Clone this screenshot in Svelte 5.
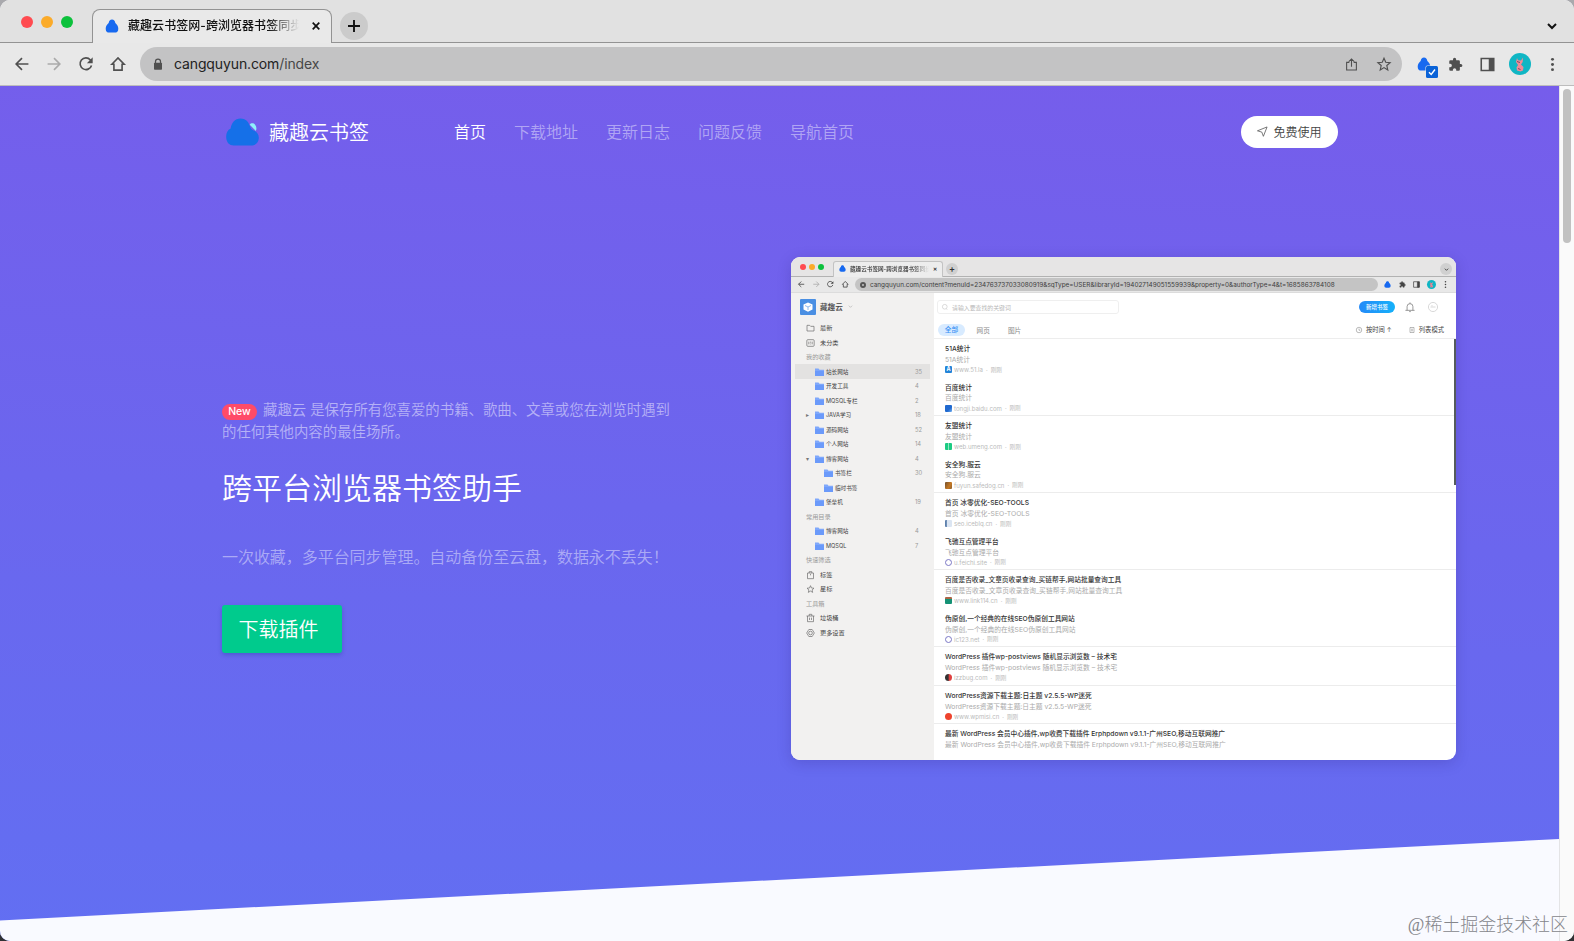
<script>
  const navItems = ['首页', '下载地址', '更新日志', '问题反馈', '导航首页'];

  const sideItems = [
    { type: 'icon', icon: 'folder', label: '最新' },
    { type: 'icon', icon: 'inbox', label: '未分类' },
    { type: 'group', label: '我的收藏' },
    { type: 'dir', label: '站长网站', count: 35, active: true },
    { type: 'dir', label: '开发工具', count: 4 },
    { type: 'dir', label: 'MQSQL专栏', count: 2 },
    { type: 'dir', label: 'JAVA学习', count: 18, arrow: 'right' },
    { type: 'dir', label: '源码网站', count: 52 },
    { type: 'dir', label: '个人网站', count: 14 },
    { type: 'dir', label: '博客网站', count: 4, arrow: 'down' },
    { type: 'dir', label: '书签栏', count: 30, child: true },
    { type: 'dir', label: '临时书签', count: '', child: true },
    { type: 'dir', label: '堡垒机', count: 19 },
    { type: 'group', label: '常用目录' },
    { type: 'dir', label: '博客网站', count: 4 },
    { type: 'dir', label: 'MQSQL', count: 7 },
    { type: 'group', label: '快速筛选' },
    { type: 'icon', icon: 'tag', label: '标签' },
    { type: 'icon', icon: 'star', label: '星标' },
    { type: 'group', label: '工具箱' },
    { type: 'icon', icon: 'trash', label: '垃圾桶' },
    { type: 'icon', icon: 'gear', label: '更多设置' }
  ];

  const bookmarks = [
    { title: '51A统计', url: 'www.51.la', icon: 'blue' },
    { title: '百度统计', url: 'tongji.baidu.com', icon: 'chart', line: true },
    { title: '友盟统计', url: 'web.umeng.com', icon: 'green' },
    { title: '安全狗.服云', url: 'fuyun.safedog.cn', icon: 'dog', line: true },
    { title: '首页 冰零优化-SEO-TOOLS', url: 'seo.iceblq.cn', icon: 'pale' },
    { title: '飞驰互点管理平台', url: 'u.feichi.site', icon: 'globe', line: true },
    { title: '百度是否收录_文章页收录查询_买链帮手,网站批量查询工具', url: 'www.link114.cn', icon: 'teal' },
    { title: '伪原创,一个经典的在线SEO伪原创工具网站', url: 'ic123.net', icon: 'globe', line: true },
    { title: 'WordPress 插件wp-postviews 随机显示浏览数 – 技术宅', url: 'izzbug.com', icon: 'bug', line: true },
    { title: 'WordPress资源下载主题:日主题 v2.5.5-WP迷死', url: 'www.wpmisi.cn', icon: 'red', line: true },
    { title: '最新 WordPress 会员中心插件,wp收费下载插件 Erphpdown v9.1.1-广州SEO,移动互联网推广', url: '', icon: '' }
  ];
</script>

{#snippet cloud(cls)}
  <svg class={cls} viewBox="0 0 16 16">
    <path fill="#1769f0" d="M8 .5C5.800.5 4.600 2 4.200 4.500 2.200 6.200.8 8.600.8 11 .8 13.800 2.300 15.500 5 15.500h6c2.700 0 4.200-1.700 4.200-4.500 0-2.400-1.400-4.800-3.400-6.500C11.400 2 10.200.5 8 .5z" />
  </svg>
{/snippet}

{#snippet glyph(name)}
  <svg class="glyph" viewBox="0 0 24 24" fill="none" stroke="currentColor" stroke-width="2">
    {#if name === 'back'}
      <path d="M23 12H2M12 2L2 12l10 10" />
    {:else if name === 'forward'}
      <path d="M1 12h21M12 2l10 10-10 10" />
    {:else if name === 'reload'}
      <path d="M21.500 14.500a10 10 0 1 1-2-9.500l2 2.200" /><path fill="currentColor" stroke="none" d="M23.500.5v10h-10z" />
    {:else if name === 'home'}
      <path d="M1.500 12.500L12 1.500l10.500 11H19V22.500H5v-10z" />
    {:else if name === 'chevron'}
      <path d="M4 8l8 8 8-8" />
    {:else if name === 'puzzle'}
      <path fill="currentColor" stroke="none" d="M20.500 11H19V7a2 2 0 0 0-2-2h-4V3.500a2.500 2.500 0 0 0-5 0V5H4a2 2 0 0 0-2 2v3.800h1.500a2.700 2.700 0 0 1 0 5.400H2V20a2 2 0 0 0 2 2h3.800v-1.500a2.700 2.700 0 0 1 5.400 0V22H17a2 2 0 0 0 2-2v-4h1.500a2.500 2.500 0 0 0 0-5z" />
    {:else if name === 'panel'}
      <path stroke-width="2.500" d="M2 2.500h20v19H2z" /><path fill="currentColor" d="M15 3h6v18h-6z" />
    {:else if name === 'more'}
      <g fill="currentColor" stroke="none"><circle cx="12" cy="2.500" r="2.700" /><circle cx="12" cy="12" r="2.700" /><circle cx="12" cy="21.500" r="2.700" /></g>
    {:else if name === 'share'}
      <path d="M8 8H3v14h18V8h-5M12 16V2M7 6.500L12 1.800l5 4.700" />
    {:else if name === 'star'}
      <path d="M12 2l3 7 7.500.700-5.700 5 1.700 7.500L12 18.200l-6.500 4 1.700-7.500-5.700-5L9 9z" />
    {:else if name === 'folder'}
      <path d="M1.500 4h8l3 3h10v14h-21z" />
    {:else if name === 'inbox'}
      <rect x="1" y="2" width="22" height="20" rx="3" /><path d="M7 8v8M12 8v3M12 14v2M17 8v8" />
    {:else if name === 'tag'}
      <path d="M3 6h18v17H3zM8 6V2h8v4" /><path d="M12 9v4" />
    {:else if name === 'trash'}
      <path d="M0 6h24M3 6v17h18V6M8 6V1h8v5M9 11v7M15 11v7" />
    {:else if name === 'gear'}
      <path d="M7 1.500h10l2.500 4L23.500 12l-4 6.500-2.500 4H7l-2.500-4L.5 12l4-6.500z" /><circle cx="12" cy="12" r="5.500" />
    {:else if name === 'bell'}
      <path d="M1 20h22M5 20v-9a7 7 0 0 1 14 0v9M12 4V1M10 23h4" />
    {:else if name === 'face'}
      <circle cx="12" cy="12" r="11" /><path d="M6 12h12M8 9h3" />
    {:else if name === 'clock'}
      <circle cx="12" cy="12" r="11" /><path d="M12 6v7h5" />
    {:else if name === 'list'}
      <path d="M4 2h16v20H4zM8 9h8M8 15h8" />
    {:else if name === 'search'}
      <circle cx="11" cy="11" r="9.500" /><path d="M17 19l4 4" />
    {:else if name === 'lock'}
      <path d="M7 11V7a5 5 0 0 1 10 0v4" stroke-width="2.500" /><rect x="4" y="9.500" width="16" height="14" rx="1.500" fill="currentColor" stroke="none" />
    {/if}
  </svg>
{/snippet}

{#snippet avatar(cls)}
  <svg class={cls} viewBox="0 0 22 22">
    <circle cx="11" cy="11" r="11" fill="#10b6c4" />
    <path fill="#ef8b97" d="M8 5l1 2.200 3 .3L14 4.500l-.3 4.500-1.700 2.500 2.500 2.500-.5 3.500-2.500 1-3.500-1-.5-3 1.500-2.500L7 9z" />
    <path d="M8 8.500l3 1M9 15.500l2.500 1" stroke="#7b4b67" />
  </svg>
{/snippet}

<div class="window">
  <div class="tabstrip">
    <div class="lights"><i class="r"></i><i class="y"></i><i class="g"></i></div>
    <div class="tab">
      {@render cloud('favicon')}
      <span class="tab-title">藏趣云书签网-跨浏览器书签同步</span>
      <svg class="close" viewBox="0 0 8 8"><path d="M.7.7l6.600 6.600M7.300.7L.7 7.300" stroke="#111" stroke-width="1.700" /></svg>
    </div>
    <div class="newtab"><svg viewBox="0 0 12 12"><path d="M6 0v12M0 6h12" stroke="#111" stroke-width="1.900" /></svg></div>
    <div class="tab-menu">{@render glyph('chevron')}</div>
  </div>

  <div class="toolbar">
    <div class="nav-btns">
      {@render glyph('back')}
      <span class="dim">{@render glyph('forward')}</span>
      {@render glyph('reload')}
      {@render glyph('home')}
    </div>
    <div class="omnibox">
      <span class="lock">{@render glyph('lock')}</span>
      <span class="address">cangquyun.com<em>/index</em></span>
      <span class="share">{@render glyph('share')}</span>
      {@render glyph('star')}
    </div>
    <div class="extensions">
      <span class="cloud-ext">
        {@render cloud('ext-icon')}
        <svg class="check" viewBox="0 0 12 12"><rect x="-.5" y="-.5" width="13" height="13" rx="2" fill="#e8e8e8" /><rect width="12" height="12" rx="1.500" fill="#0a63d8" /><path d="M3 6.200l2.200 2.300L9 3.500" fill="none" stroke="#fff" stroke-width="1.400" /></svg>
      </span>
      {@render glyph('puzzle')}
      {@render glyph('panel')}
      {@render avatar('avatar')}
      <span class="more">{@render glyph('more')}</span>
    </div>
  </div>

  <div class="content">
    <main class="hero">
      <svg class="slope" viewBox="0 0 1559 82" preserveAspectRatio="none"><path d="M0 81.500L1559 0v82H0z" fill="#f9faff" /></svg>
      <header class="header">
        <div class="brand">
          <svg viewBox="0 0 34 28">
            <path fill="#8ff1fa" d="M24.500 6.500c1-2 4-2 5.500 0s1.700 4 .8 6.500z" />
            <path fill="#1570e8" d="M15 0C9 0 5.500 4.500 4.800 10.500 1.500 12 0 15.500.200 19.500.5 25 3.500 28 8 28h17.500c5 0 8-3 8.300-7.500.200-4-1.800-6.800-5.300-8C26 11.500 25.500 10 24.500 7.500 23 3 20 0 15 0z" />
          </svg>
          <span>藏趣云书签</span>
        </div>
        <nav>
          {#each navItems as item, i}
            <a href="#top" class:active={i === 0}>{item}</a>
          {/each}
        </nav>
        <button class="free">
          <svg viewBox="0 0 12 12"><path d="M.5 5.200L11.500.8 7.300 11.500 5.500 6.700z" fill="none" stroke="#555" stroke-width=".9" stroke-linejoin="round" /></svg>
          免费使用
        </button>
      </header>

      <div class="hero-body">
        <section class="intro">
          <p class="lead"><span class="badge">New</span>藏趣云 是保存所有您喜爱的书籍、歌曲、文章或您在浏览时遇到<br />的任何其他内容的最佳场所。</p>
          <h1>跨平台浏览器书签助手</h1>
          <p class="sub">一次收藏，多平台同步管理。自动备份至云盘，数据永不丢失！</p>
          <button class="download">下载插件</button>
        </section>

        <div class="preview">
          <div class="m-tabs">
            <div class="m-lights"><i class="r"></i><i class="y"></i><i class="g"></i></div>
            <div class="m-tab">
              {@render cloud('m-cloud')}
              <span>藏趣云书签网-跨浏览器书签同步</span>
              <b>✕</b>
            </div>
            <div class="m-round">+</div>
            <div class="m-round m-last">{@render glyph('chevron')}</div>
          </div>
          <div class="m-toolbar">
            <div class="m-nav">
              {@render glyph('back')}
              <span class="dim">{@render glyph('forward')}</span>
              {@render glyph('reload')}
              {@render glyph('home')}
            </div>
            <div class="m-url">
              <i></i><span>cangquyun.com/content?menuId=234763737033080919&amp;sqType=USER&amp;libraryId=194027149051559939&amp;property=0&amp;authorType=4&amp;t=1685863784108</span>
            </div>
            <div class="m-ext">
              {@render cloud('m-cloud')}
              {@render glyph('puzzle')}
              {@render glyph('panel')}
              {@render avatar('m-avatar')}
              {@render glyph('more')}
            </div>
          </div>
          <div class="m-main">
            <aside>
              <div class="m-brand">
                <svg viewBox="0 0 16 16"><rect width="16" height="16" rx="1" fill="#4a8fe3" /><path d="M8 3.500l4.500 2v5L8 12.800l-4.500-2.300v-5z" fill="#fff" /><path d="M5 6.500L8 8l3-1.500M8 8v3" stroke="#8fb9ee" fill="none" /></svg>
                <span>藏趣云</span>
                {@render glyph('chevron')}
              </div>
              {#each sideItems as item}
                {#if item.type === 'icon'}
                  <div class="side-item">{@render glyph(item.icon)}<span>{item.label}</span></div>
                {:else if item.type === 'group'}
                  <div class="side-item group">{item.label}</div>
                {:else}
                  <div class="side-item dir" class:selected={item.active} class:child={item.child}>
                    <span class="arrow">{item.arrow === 'right' ? '▸' : item.arrow === 'down' ? '▾' : ''}</span>
                    <svg class="dir-icon" viewBox="0 0 9 8"><path d="M0 .5h3.500l1 1.200H9V8H0z" fill="#7fa8fb" /><path d="M0 3h9v5H0z" fill="#6b9afa" /></svg>
                    <span>{item.label}</span>
                    <em>{item.count}</em>
                  </div>
                {/if}
              {/each}
            </aside>
            <div class="list-pane">
              <div class="m-search-row">
                <div class="m-search">{@render glyph('search')}<span>请输入要查找的关键词</span></div>
                <div class="m-add">新增书签</div>
                <span class="m-bell">{@render glyph('bell')}</span>
                <span class="m-face">{@render glyph('face')}</span>
              </div>
              <div class="m-filter">
                <b>全部</b><span>网页</span><span>图片</span>
                <div class="m-sort">{@render glyph('clock')}按时间 ↑</div>
                <div class="m-mode">{@render glyph('list')}列表模式</div>
              </div>
              <div class="m-list">
                <div class="m-scroll"></div>
                {#each bookmarks as item}
                  <div class="bookmark" class:line={item.line}>
                    <strong>{item.title}</strong>
                    <p>{item.title}</p>
                    {#if item.url}
                      <div class="meta"><i class={item.icon}>{item.icon === 'blue' ? 'A' : ''}</i>{item.url}<span>·</span><span>刚刚</span></div>
                    {/if}
                  </div>
                {/each}
              </div>
            </div>
          </div>
        </div>
      </div>
    </main>
    <div class="scrollbar"><div class="thumb"></div></div>
  </div>
  <div class="watermark">@稀土掘金技术社区</div>
</div>

<style>
  :global(body) {
    background: linear-gradient(#a9a9ad 50%, #303134 50%);
  }

  .window {
    position: relative;
    width: 1574px;
    height: 941px;
    display: flex;
    flex-direction: column;
    border-radius: 10px;
    overflow: hidden;
    background: #f9faff;
    font-family: Inter, "Noto Sans CJK SC", sans-serif;
  }

  .window *,
  .window *::before {
    box-sizing: border-box;
  }

  svg {
    display: block;
    flex: none;
    overflow: visible;
  }

  p,
  h1 {
    margin: 0;
  }

  em,
  i {
    font-style: normal;
  }

  button {
    border: 0;
    padding: 0;
    font-family: inherit;
  }

  .tabstrip {
    height: 43px;
    flex: none;
    display: flex;
    background: #e1e1e1;
    border-bottom: 1px solid #939393;
  }

  .lights {
    display: flex;
    gap: 8px;
    padding: 16px 0 0 21px;
    width: 92px;
    flex: none;
  }

  .lights i {
    width: 12px;
    height: 12px;
    border-radius: 50%;
  }

  .r { background: #ff4b50; }
  .y { background: #fbab2a; }
  .g { background: #0cc13c; }

  .tab {
    display: flex;
    align-items: center;
    width: 240px;
    height: 34px;
    margin-top: 9px;
    padding: 0 11px 1px 12px;
    border: 1px solid #939393;
    border-bottom: 0;
    border-radius: 8px 8px 0 0;
    background: #e9e9e9;
  }

  .tab .favicon {
    width: 14px;
    height: 14px;
  }

  .tab-title {
    width: 172px;
    margin-left: 9px;
    overflow: hidden;
    white-space: nowrap;
    font-size: 12px;
    font-weight: 500;
    line-height: 18px;
    color: #111;
    letter-spacing: 0.05px;
    mask-image: linear-gradient(90deg, #000 82%, transparent 100%);
  }

  .close {
    width: 8px;
    height: 8px;
    margin-left: 13px;
  }

  .newtab {
    width: 28px;
    height: 28px;
    margin: 12px 0 0 8px;
    border-radius: 50%;
    background: #cbcbcb;
    display: grid;
    place-items: center;
  }

  .newtab svg {
    width: 12px;
  }

  .tab-menu {
    margin: 20px 16px 0 auto;
    color: #111;
  }

  .tab-menu .glyph {
    width: 12px;
    height: 12px;
    stroke-width: 4;
  }

  .toolbar {
    height: 43px;
    flex: none;
    display: flex;
    align-items: center;
    background: #e8e8e8;
    border-bottom: 1px solid #bdbdbd;
    color: #505050;
  }

  .nav-btns {
    display: flex;
    gap: 18px;
    padding-left: 15px;
    width: 140px;
    flex: none;
  }

  .nav-btns .glyph {
    width: 14px;
    height: 14px;
    stroke-width: 2.800;
  }

  .dim {
    color: #aaa;
  }

  .omnibox {
    width: 1262px;
    height: 34px;
    border-radius: 17px;
    background: #c3c3c4;
    display: flex;
    align-items: center;
    padding: 0 11px 0 12px;
  }

  .omnibox > .glyph {
    width: 14px;
    height: 14px;
  }

  .lock .glyph {
    width: 12px;
    height: 12px;
  }

  .address {
    margin-left: 10px;
    font-family: Inter, sans-serif;
    font-size: 14px;
    line-height: 20px;
    color: #222;
    letter-spacing: -0.12px;
  }

  .address em {
    color: #484848;
  }

  .share {
    margin: 0 19px 0 auto;
  }

  .share .glyph {
    width: 13px;
    height: 15px;
  }

  .extensions {
    display: flex;
    align-items: center;
    margin-left: 15px;
  }

  .extensions .glyph {
    width: 15px;
    height: 15px;
  }

  .cloud-ext {
    position: relative;
    margin-right: 17px;
  }

  .ext-icon {
    width: 14px;
    height: 14px;
  }

  .check {
    position: absolute;
    left: 9px;
    top: 9px;
    width: 12px;
    height: 12px;
  }

  .extensions > .glyph {
    margin-right: 17px;
  }

  .avatar {
    width: 22px;
    height: 22px;
    margin: 0 15px 0 -3px;
  }

  .more .glyph {
    width: 13px;
    height: 13px;
  }

  .content {
    flex: 1;
    display: flex;
    min-height: 0;
  }

  .hero {
    position: relative;
    width: 1559px;
    background: linear-gradient(183deg, #765deb 0%, #6b66ee 50%, #626ff2 100%);
  }

  .slope {
    position: absolute;
    left: 0;
    bottom: 20px;
    width: 1559px;
    height: 82px;
  }

  .hero::after {
    content: '';
    position: absolute;
    left: 0;
    right: 0;
    bottom: 0;
    height: 20.500px;
    background: #f9faff;
  }

  .header {
    display: flex;
    align-items: center;
    height: 92px;
    padding: 0 221px 0 226px;
  }

  .brand {
    display: flex;
    align-items: center;
    width: 228px;
    font-size: 20px;
    line-height: 30px;
    color: #fff;
    gap: 10px;
    font-weight: 350;
  }

  .brand span {
    padding-top: 2px;
  }

  .brand svg {
    width: 33px;
    height: 28px;
  }

  nav {
    display: flex;
    gap: 28px;
    font-size: 16px;
    line-height: 24px;
    font-weight: 350;
  }

  nav a {
    color: rgba(255, 255, 255, 0.46);
    text-decoration: none;
  }

  nav a.active {
    color: #fff;
  }

  .free {
    display: flex;
    align-items: center;
    gap: 6px;
    margin-left: auto;
    width: 97px;
    height: 32px;
    padding: 0 0 1px 16px;
    border-radius: 16px;
    background: #fff;
    color: #444;
    font-size: 12px;
    font-weight: 350;
  }

  .free svg {
    width: 10.500px;
    height: 11px;
  }

  .hero-body {
    display: flex;
    align-items: flex-start;
    padding: 79px 0 0 222px;
  }

  .intro {
    width: 569px;
    flex: none;
    padding-top: 142px;
    font-weight: 350;
  }

  .lead {
    font-size: 14.400px;
    line-height: 22px;
    color: rgba(255, 255, 255, 0.5);
    white-space: nowrap;
  }

  .badge {
    display: inline-block;
    width: 35px;
    height: 16px;
    margin-right: 6px;
    border-radius: 8px;
    background: #ff4b68;
    color: #fff;
    text-align: center;
    font-size: 10.500px;
    font-weight: 500;
    line-height: 16px;
    vertical-align: 0;
  }

  h1 {
    margin-top: 23px;
    font-size: 30px;
    font-weight: 350;
    line-height: 44px;
    color: #fff;
  }

  .sub {
    margin-top: 35px;
    font-size: 16px;
    line-height: 24px;
    color: rgba(255, 255, 255, 0.46);
    white-space: nowrap;
    letter-spacing: -0.05px;
  }

  .download {
    display: block;
    width: 120px;
    height: 48px;
    margin-top: 36px;
    padding: 0 7px 2px 0;
    border-radius: 3px;
    background: #00cb8d;
    box-shadow: 0 2px 4px rgba(0, 40, 120, 0.25);
    color: #fff;
    font-size: 20px;
    font-weight: 350;
  }

  /* product screenshot */
  .preview {
    width: 665px;
    height: 503px;
    display: flex;
    flex-direction: column;
    border-radius: 9px;
    overflow: hidden;
    background: #fff;
    box-shadow: 0 3px 14px rgba(40, 30, 120, 0.22);
    color: #444;
    font-size: 6.200px;
  }

  .preview .glyph {
    width: 8px;
    height: 8px;
  }

  .m-tabs {
    display: flex;
    height: 20px;
    flex: none;
    background: #e6e5e5;
    border-bottom: 1px solid #b2b2b2;
  }

  .m-lights {
    display: flex;
    gap: 3px;
    width: 42px;
    padding: 7px 0 0 9px;
    flex: none;
  }

  .m-lights i {
    width: 6px;
    height: 6px;
    border-radius: 50%;
  }

  .m-tab {
    display: flex;
    align-items: center;
    width: 110px;
    height: 16px;
    margin-top: 4px;
    padding: 0 5px 2px;
    border: 1px solid #c3c3c3;
    border-bottom: 0;
    border-radius: 3px 3px 0 0;
    background: #ededed;
    color: #333;
  }

  .m-cloud {
    width: 7px;
    height: 7px;
  }

  .m-tab span {
    width: 79px;
    margin-left: 4px;
    overflow: hidden;
    white-space: nowrap;
    font-size: 5.600px;
    font-weight: 500;
    mask-image: linear-gradient(90deg, #000 80%, transparent);
  }

  .m-tab b {
    margin-left: 4px;
    font-size: 5px;
  }

  .m-round {
    width: 12px;
    height: 12px;
    margin: 6px 0 0 3px;
    border-radius: 50%;
    background: #d0d0d0;
    text-align: center;
    font-size: 9px;
    font-weight: 600;
    line-height: 11px;
    color: #333;
  }

  .m-last {
    margin: 6px 4px 0 auto;
    display: grid;
    place-items: center;
  }

  .m-last .glyph {
    width: 5px;
    height: 5px;
    stroke-width: 4;
  }

  .m-toolbar {
    display: flex;
    align-items: center;
    height: 16px;
    flex: none;
    background: #e8e8e8;
    border-bottom: 1px solid #dcdcdc;
  }

  .m-nav {
    display: flex;
    gap: 8px;
    width: 64px;
    padding-left: 7px;
    flex: none;
  }

  .m-nav .glyph {
    width: 6.500px;
    height: 6.500px;
    stroke-width: 3;
  }

  .m-url {
    display: flex;
    align-items: center;
    width: 523px;
    height: 13px;
    padding-left: 5px;
    border-radius: 7px;
    background: #c4c4c4;
    white-space: nowrap;
    font-size: 6.400px;
    color: #3d3d3d;
  }

  .m-url i {
    width: 6px;
    height: 6px;
    margin-right: 4px;
    border-radius: 50%;
    border: 2px solid #555;
  }

  .m-url span {
    letter-spacing: 0.01px;
  }

  .m-ext {
    display: flex;
    align-items: center;
    gap: 7.500px;
    padding-left: 6px;
  }

  .m-ext .glyph {
    width: 7px;
    height: 7px;
  }

  .m-ext .glyph:last-child {
    margin-left: -1px;
  }

  .m-avatar {
    width: 9px;
    height: 9px;
    margin-left: -1px;
  }

  .m-main {
    display: flex;
    flex: 1;
    min-height: 0;
  }

  aside {
    width: 143px;
    flex: none;
    background: #f2f1f0;
  }

  .m-brand {
    display: flex;
    align-items: center;
    height: 27.800px;
    padding-left: 9px;
    font-size: 7.600px;
    font-weight: 500;
  }

  .m-brand svg:first-child {
    width: 16px;
    height: 16px;
  }

  .m-brand span {
    margin: 0 5px 0 4px;
  }

  .m-brand .glyph {
    width: 5px;
    height: 5px;
    color: #888;
  }

  .side-item {
    display: flex;
    align-items: center;
    height: 14.530px;
    padding-left: 15px;
    line-height: 12px;
    color: #444;
  }

  .side-item .glyph {
    width: 9px;
    height: 8px;
    margin-right: 5px;
    color: #666;
  }

  .group {
    color: #999;
  }

  .dir {
    margin: 0 4px;
    padding: 0 5px 0 11px;
    font-size: 5.600px;
  }

  .child {
    padding-left: 20px;
  }

  .selected {
    background: #e3e2e1;
  }

  .arrow {
    width: 9px;
    color: #777;
    font-size: 6px;
  }

  .dir-icon {
    width: 9px;
    height: 8px;
    margin-right: 2px;
  }

  .dir em {
    width: 10px;
    margin-left: auto;
    color: #999;
    font-size: 5.800px;
  }

  .list-pane {
    flex: 1;
    display: flex;
    flex-direction: column;
    min-width: 0;
  }

  .m-search-row {
    display: flex;
    align-items: center;
    height: 29px;
    padding: 0 0 1px 3px;
    flex: none;
  }

  .m-search {
    display: flex;
    align-items: center;
    gap: 4px;
    width: 182px;
    height: 14px;
    padding-left: 4px;
    border: 1px solid #efefef;
    border-radius: 3px;
    color: #b8b8b8;
    font-size: 5.900px;
  }

  .m-search .glyph {
    width: 6px;
    height: 6px;
  }

  .m-add {
    width: 36px;
    height: 12px;
    margin: 0 9.500px 0 240px;
    border-radius: 6px;
    background: linear-gradient(90deg, #248af8, #15b1fa);
    color: #fff;
    text-align: center;
    font-size: 5.500px;
    font-weight: 500;
    line-height: 12px;
  }

  .m-bell {
    color: #777;
    margin-right: 13.500px;
  }

  .m-bell .glyph,
  .m-face .glyph {
    width: 10px;
    height: 10px;
    stroke-width: 1.800;
  }

  .m-face {
    color: #ccc;
  }

  .m-filter {
    display: flex;
    align-items: center;
    height: 17px;
    flex: none;
    padding: 0 12px 1px 4px;
    border-bottom: 1px solid #ededed;
    font-size: 6.700px;
    color: #888;
  }

  .m-filter b {
    width: 27px;
    height: 12px;
    margin-right: 11.500px;
    border-radius: 6px;
    background: #d8ebff;
    color: #3b92f5;
    text-align: center;
    font-weight: 500;
    line-height: 12px;
  }

  .m-filter span {
    margin-right: 18px;
  }

  .m-sort,
  .m-mode {
    display: flex;
    align-items: center;
    gap: 4px;
    font-size: 6.300px;
    color: #444;
  }

  .m-sort {
    margin-left: auto;
  }

  .m-mode {
    margin-left: 17px;
  }

  .m-sort .glyph,
  .m-mode .glyph {
    width: 6px;
    height: 6px;
    color: #777;
  }

  .m-list {
    position: relative;
    flex: 1;
  }

  .m-scroll {
    position: absolute;
    right: 0;
    top: 0;
    width: 2.500px;
    height: 146px;
    background: #555b5c;
  }

  .bookmark {
    height: 38.550px;
    padding: 4px 0 0 11px;
    white-space: nowrap;
    border-bottom: 1px solid transparent;
  }

  .bookmark.line {
    border-color: #ececec;
  }

  .bookmark strong,
  .bookmark p {
    display: block;
    height: 10.800px;
    font-size: 6.720px;
    font-weight: 500;
    line-height: 11px;
    color: #333;
  }

  .bookmark p {
    font-weight: 400;
    font-size: 6.780px;
    color: #aaa;
  }

  .meta {
    display: flex;
    align-items: center;
    gap: 2px;
    height: 10px;
    font-size: 6.100px;
    color: #bbb;
  }

  .meta span {
    margin-left: 1px;
    font-size: 5.600px;
  }

  .meta i {
    width: 7px;
    height: 7px;
    border-radius: 1px;
    color: #fff;
    font-size: 5.500px;
    font-weight: 700;
    line-height: 7px;
    text-align: center;
  }

  .blue { background: #2384d8; }
  .chart { background: linear-gradient(135deg, #2069cf 60%, #7bb6f3); }
  .green { background: linear-gradient(90deg, #1ccb83 40%, #c9f5e2 45%, #1ccb83 60%); }
  .dog { background: linear-gradient(120deg, #70502f, #c67923 60%, #8b602f); }
  .pale { background: linear-gradient(90deg, #5d80ac 20%, #dbe5f2 30%); }
  .teal { background: linear-gradient(#ac6646 25%, #159275 30%); }
  .meta .globe { border: 1.500px solid #7c78c6; border-radius: 50%; }
  .meta .bug { background: linear-gradient(90deg, #333 45%, #df4040 60%); border-radius: 50%; }
  .meta .red { background: #ee432d; border-radius: 50%; }

  .scrollbar {
    width: 15px;
    background: #fafafa;
    border-left: 1px solid #e4e4e6;
    padding: 3px 0 0 3px;
  }

  .thumb {
    width: 8px;
    height: 154px;
    border-radius: 4px;
    background: #c1c1c1;
  }

  .watermark {
    position: absolute;
    right: 6px;
    bottom: 4px;
    font-family: "Liberation Serif", "Noto Sans CJK SC", serif;
    font-size: 18px;
    font-weight: 300;
    line-height: 24px;
    color: #85868b;
    letter-spacing: -0.05px;
  }
</style>
